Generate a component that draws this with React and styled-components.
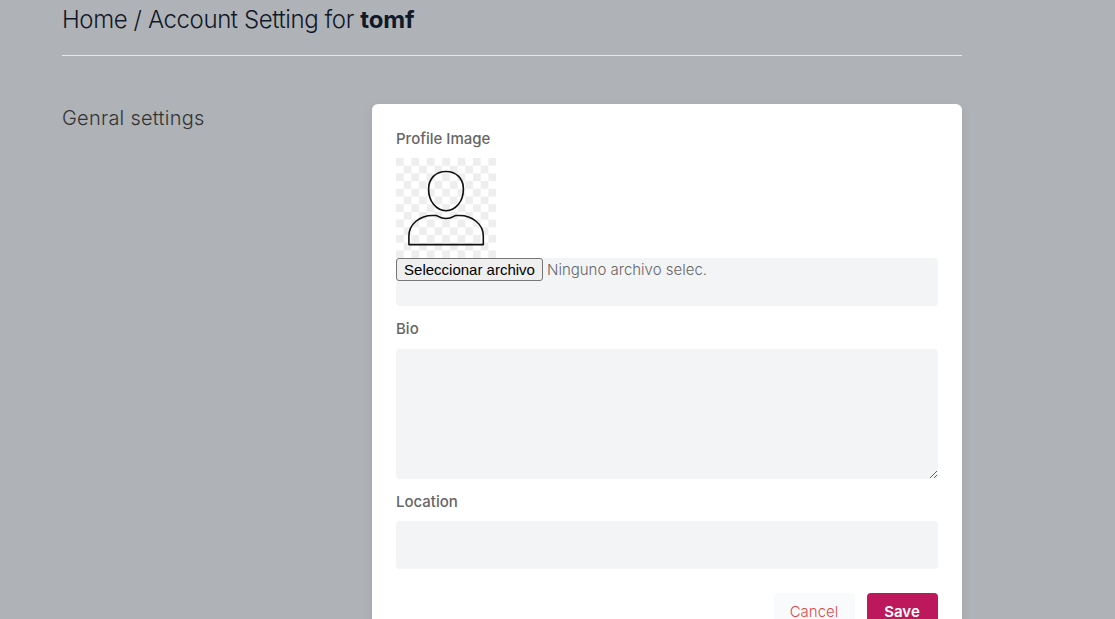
import React from 'react';
import styled, { createGlobalStyle } from 'styled-components';

const GlobalStyle = createGlobalStyle`
  *, *::before, *::after { box-sizing: border-box; }
  body {
    margin: 0;
    height: 619px;
    overflow: hidden;
    background: #afb3b8;
    font-family: Inter, 'Liberation Sans', sans-serif;
    font-size: 15px;
    line-height: 24px;
    font-weight: 300;
    color: #666;
  }
`;

const Page = styled.main`
  width: 900px;
  height: 619px;
  margin-left: 62px;
`;

const Title = styled.h1`
  margin: 0;
  height: 56px;
  padding-top: 2px;
  border-bottom: 1px solid #e5e7eb;
  font-size: 24px;
  line-height: 36px;
  font-weight: 300;
  letter-spacing: -0.4px;
  color: #111827;
  white-space: nowrap;
`;

const UserName = styled.b`
  font-weight: 700;
  letter-spacing: -0.15px;
`;

const Columns = styled.div`
  display: grid;
  grid-template-columns: 310px 590px;
  margin-top: 48px;
  align-items: start;
`;

const SectionTitle = styled.h2`
  margin: 0;
  font-size: 20px;
  line-height: 28px;
  font-weight: 300;
  letter-spacing: 0.24px;
  color: #333;
`;

const Card = styled.form`
  padding: 23px 24px 24px;
  background: #fff;
  border-radius: 6px;
  box-shadow: 0 4px 12px rgba(0, 0, 0, 0.08);
`;

const Label = styled.label`
  display: block;
  height: 24px;
  margin-top: ${(p) => p.$top || 0}px;
  margin-bottom: ${(p) => p.$bottom || 7}px;
  font-weight: 500;
`;

const Avatar = styled.svg`
  display: block;
`;

const FileField = styled.div`
  display: flex;
  align-items: flex-start;
  gap: 4px;
  height: 48px;
  background: #f3f4f6;
  border-radius: 4px;
  color: #666;
`;

const FileButton = styled.button`
  width: 147px;
  height: 23px;
  padding: 0;
  border: 1px solid #767676;
  border-radius: 3px;
  background: #efefef;
  color: #000;
  font: 400 15px/20px 'Liberation Sans', sans-serif;
  white-space: nowrap;
`;

const TextArea = styled.textarea`
  display: block;
  width: 100%;
  height: 130px;
  border: 0;
  border-radius: 4px;
  background: #f3f4f6;
  resize: vertical;
`;

const TextInput = styled.input`
  display: block;
  width: 100%;
  height: 48px;
  border: 0;
  border-radius: 4px;
  background: #f3f4f6;
`;

const Actions = styled.div`
  display: flex;
  justify-content: flex-end;
  gap: 12px;
  margin-top: 24px;
`;

const Button = styled.button`
  width: ${(p) => (p.$primary ? 71 : 81)}px;
  height: 38px;
  padding: 0 1px 0 0;
  border: 0;
  border-radius: 4px;
  background: ${(p) => (p.$primary ? '#be185d' : '#f9fafb')};
  color: ${(p) => (p.$primary ? '#fff' : '#dc4a4a')};
  font: ${(p) => (p.$primary ? 600 : 300)} 15px/24px Inter, sans-serif;
`;

export default function App() {
  return (
    <>
      <GlobalStyle />
      <Page>
        <Title>
          Home / Account Setting for <UserName>tomf</UserName>
        </Title>
        <Columns>
          <SectionTitle>Genral settings</SectionTitle>
          <Card>
            <Label>Profile Image</Label>
            <Avatar width="100" height="100" viewBox="0 0 100 100" fill="none">
              <defs>
                <pattern id="checker" width="15.4" height="15.4" patternUnits="userSpaceOnUse">
                  <path d="M0 0h7.7v7.7H0zM7.7 7.7h7.7v7.7H7.7z" fill="#eee" />
                </pattern>
              </defs>
              <path d="M0 0h100v100H0z" fill="url(#checker)" />
              <g stroke="#111" strokeWidth="1.6" strokeLinejoin="round">
                <path d="M50 13.5c10.5 0 17.4 7.2 17.4 17.4C67.4 43 60 52.7 50 52.7S32.6 43 32.6 30.9C32.6 20.7 39.5 13.5 50 13.5Z" />
                <path d="M12.9 86.6V78C12.9 66 24 57.5 36.5 57.5H40C42 57.5 43.5 60.5 50 60.5S58 57.500 60 57.500H63.500C76 57.500 87.300 66 87.300 78v8.600Z" />
              </g>
            </Avatar>
            <FileField>
              <FileButton type="button">Seleccionar archivo</FileButton>
              <span>Ninguno archivo selec.</span>
            </FileField>
            <Label $top={11} $bottom={8}>Bio</Label>
            <TextArea />
            <Label $top={11}>Location</Label>
            <TextInput />
            <Actions>
              <Button type="button">Cancel</Button>
              <Button type="button" $primary>Save</Button>
            </Actions>
          </Card>
        </Columns>
      </Page>
    </>
  );
}
